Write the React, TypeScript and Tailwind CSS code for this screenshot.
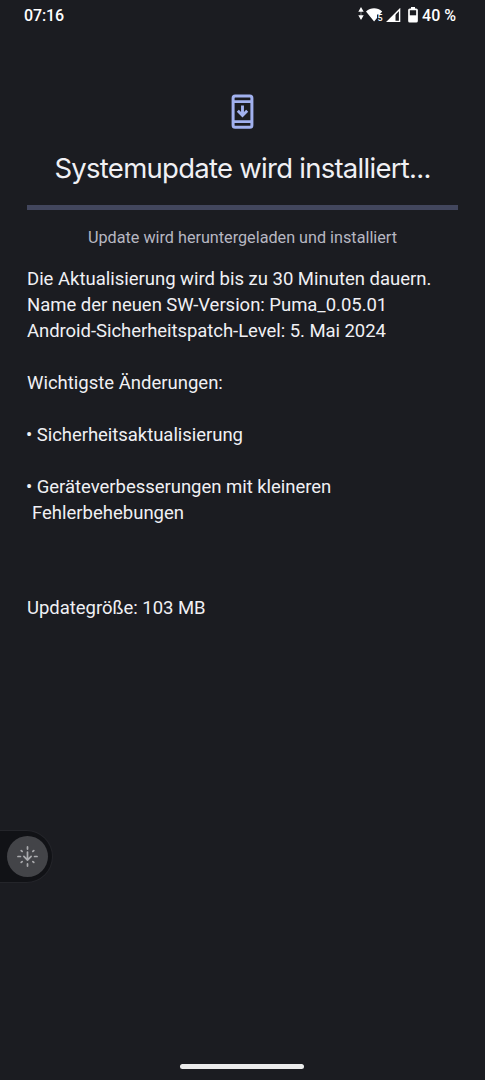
const InstallIcon = () => (
  <svg width="24" height="36" viewBox="0 0 24 36" fill="none" stroke="#a2b1ef">
    <rect x="2.1" y="2" width="18.8" height="31.2" rx="2" strokeWidth="3" />
    <path d="M2.1 7.6h18.8M2.1 27.6h18.8" strokeWidth="2.8" />
    <path d="M11.5 11.4v10M6.8 16.8l4.7 4.7 4.7-4.7" strokeWidth="2.9" />
  </svg>
);

const DataArrows = () => (
  <svg width="6" height="13" viewBox="0 0 6 13" fill="#fff">
    <path d="M3 0l2.7 4.8H.3zM3 13l2.7-4.8H.3z" />
    <path d="M2.4 3h1.2v6H2.4z" opacity="0.35" />
  </svg>
);

const WifiIcon = () => (
  <svg width="18" height="14" viewBox="0 0 18 14">
    <path d="M0 3.4C4.8-.7 11.4-.7 16.2 3.4L13.6 6.4H11V10L8.1 13.4z" fill="#fff" />
    <text
      x="11.4"
      y="12.6"
      fill="#fff"
      className="font-[Roboto,sans-serif] text-[9px] font-medium"
    >
      5
    </text>
  </svg>
);

const SignalIcon = () => (
  <svg width="15" height="15" viewBox="0 0 15 15">
    <path d="M1.6 13.4L13.6 1.4v12z" fill="none" stroke="#fff" strokeWidth="1.4" />
    <path d="M9.5 5.5L1.2 14h8.3z" fill="#fff" />
  </svg>
);

const BatteryIcon = () => (
  <svg width="10" height="16" viewBox="0 0 10 16">
    <path d="M3 0h4v2H3z" fill="#fff" />
    <rect x="1" y="2.3" width="8" height="12.4" rx="0.8" fill="none" stroke="#fff" strokeWidth="1.7" />
    <path d="M1 8.3h8v6.4H1z" fill="#fff" />
  </svg>
);

const AssistIcon = () => (
  <svg
    width="21"
    height="21"
    viewBox="0 0 22 22"
    fill="none"
    stroke="#aaabae"
    strokeWidth="1.8"
    strokeLinecap="round"
    strokeLinejoin="round"
  >
    <path d="M11 6.3v8.2M7.2 10.9l3.8 3.8 3.8-3.8" />
    <path d="M11 1v2.2M11 18.8V21M1 11h2.6M18.4 11H21M4.4 4.8l1 .9M17.6 4.8l-1 .9M4.4 17.2l1-.9M17.6 17.2l-1-.9" />
  </svg>
);

const StatusBar = () => (
  <header className="flex h-8 items-center justify-between pr-[29px] pl-6 text-base font-medium text-white">
    <span className="tracking-[-0.1px]">07:16</span>
    <div className="flex items-center">
      <div className="mb-[5px]">
        <DataArrows />
      </div>
      <div className="mb-[3px] ml-[2px]">
        <WifiIcon />
      </div>
      <div className="mb-[2px] ml-[2px]">
        <SignalIcon />
      </div>
      <div className="mb-[2px] ml-[7px]">
        <BatteryIcon />
      </div>
      <span className="ml-1">40 %</span>
    </div>
  </header>
);

const App = () => {
  return (
    <div className="flex h-[1080px] w-full flex-col overflow-hidden bg-[#1b1c21] font-[Roboto,sans-serif] text-[#f0f0f4]">
      <StatusBar />

      <main className="h-[798px] px-[27px] pt-[62px]">
        <div className="flex justify-center">
          <InstallIcon />
        </div>
        <h1 className="mt-[18px] text-center font-[Inter,sans-serif] text-[27.5px] leading-10 tracking-[-0.73px] whitespace-nowrap">
          Systemupdate wird installiert...
        </h1>
        {/* Progress track */}
        <div className="mt-[17px] h-[5px] w-[431px] bg-[#42465d]"></div>
        <p className="mt-[18px] text-center text-[16.2px] leading-5 text-[#b7b7c1]">
          Update wird heruntergeladen und installiert
        </p>

        <div className="mt-[18px] text-[18.5px] leading-[26px] whitespace-nowrap">
          <p className="tracking-[-0.01px]">Die Aktualisierung wird bis zu 30 Minuten dauern.</p>
          <p className="tracking-[-0.03px]">Name der neuen SW-Version: Puma_0.05.01</p>
          <p className="tracking-[-0.05px]">Android-Sicherheitspatch-Level: 5. Mai 2024</p>
          <p className="mt-[26px]">Wichtigste Änderungen:</p>
          <p className="mt-[26px] -indent-px tracking-[-0.04px]">• Sicherheitsaktualisierung</p>
          <p className="mt-[26px] -indent-px tracking-[-0.03px]">• Geräteverbesserungen mit kleineren</p>
          <p className="pl-[5px]">Fehlerbehebungen</p>
          <p className="mt-[69px] tracking-[-0.03px]">Updategröße: 103 MB</p>
        </div>
      </main>

      {/* Edge handle */}
      <div className="flex h-[53px] w-[53px] items-center justify-end rounded-r-full border border-l-0 border-[#24252a] bg-[#111216] pr-1">
        <div className="flex size-[41px] items-center justify-center rounded-full bg-[#434448]">
          <AssistIcon />
        </div>
      </div>

      <div className="mt-auto mr-px mb-[11px] h-[5px] w-[124px] self-center rounded-full bg-[#ececec]"></div>
    </div>
  );
};

export default App;
